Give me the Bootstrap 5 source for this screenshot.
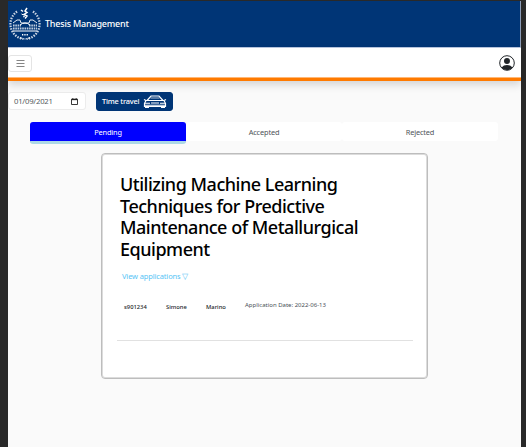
<!DOCTYPE html>
<html lang="en">
<head>
<meta charset="utf-8">
<meta name="viewport" content="width=device-width, initial-scale=1">
<title>Thesis Management</title>
<link href="https://cdn.jsdelivr.net/npm/bootstrap@5.3.0/dist/css/bootstrap.min.css" rel="stylesheet">
<style>
body{font-family:"Noto Sans","Open Sans",sans-serif;background:#292929;font-size:7.2px;line-height:1.5;overflow:hidden}
.app{width:513px;height:446px;margin:1px 0 0 8px;background:#fafafa}
.app svg{display:block;flex:none}
.brandbar{height:46px;background:#003576;color:#fff;border-right:1px solid #8d9db8}
.brandbar h1{font-size:9px;font-weight:500;letter-spacing:-.2px;line-height:14px;margin:0 0 0 3px}
.toolbar{height:34px;background:#fff;border-top:1px solid #b5c3dd;border-bottom:3px solid #ff7a00;box-shadow:0 4px 8px rgba(0,0,0,.15);padding-right:6px}
.toolbar::after{content:"";position:absolute;left:0;right:0;bottom:0;height:1px;background:#ffb877}
.menu-btn{width:24px;height:17px;border:1px solid #e4e4e4;border-radius:3px;background:#fff;padding:0;color:#777}
.date-box{width:78px;height:18px;border:1px solid #ececec;border-radius:3px;background:#fff;color:#555b61;font-size:7.7px;letter-spacing:-.22px;padding:1px 7px 0 5px}
.travel-btn{width:77px;height:19px;margin-left:10px;background:#003576;border:1px solid #003576;border-radius:3px;color:#fff;font-size:7.4px;font-weight:500;letter-spacing:-.2px;padding:0 5px;line-height:1}
.controls{padding-top:11px;height:41px}
.tabs{margin:0 23px 0 22px;height:22px}
.tab-item{height:19px;background:#fff;border:0;border-radius:3px;color:#50555a;font-size:7.4px;letter-spacing:-.16px;line-height:19px;padding:1px 0 0;text-align:center;flex:1 1 0}
.tab-item.active{background:#00f;color:#fff;height:22px;border-bottom:3px solid #add8e6}
.thesis{width:327px;height:226px;margin:9px 0 0 93px;border:1px solid #bdbdbd;box-shadow:inset 0 0 0 1px #dcdcdc;border-radius:4px;background:#fff;color:#000;padding:20px 14px 0 15px}
.thesis h2{font-size:18px;line-height:21.6px;font-weight:500;letter-spacing:-.48px;margin:0 0 0 3px;white-space:nowrap}
.view-link{color:#57c4f5;font-size:7.5px;letter-spacing:-.14px;line-height:12px;margin:10px 0 0 5px;text-decoration:none}
.entry{margin:15px 0 0;height:43px;padding-left:7px;font-size:5.8px;line-height:8px;color:#212529}
.entry strong{font-weight:500;margin-top:6px}
.entry span{color:#495057;font-size:6px;margin-top:4px}
.c1{width:42px}.c2{width:40px}.c3{width:39px}
.rule{height:1px;background:#e1e1e1}
</style>
<script src="https://cdn.jsdelivr.net/npm/bootstrap@5.3.0/dist/js/bootstrap.bundle.min.js"></script>
</head>
<body>
<div class="app">
  <header class="brandbar d-flex align-items-center">
    <svg width="34" height="34" viewBox="0 0 34 34" fill="none" stroke="#fff">
      <path d="M9 4.500A15.200 15.200 0 0 0 15 32M25 4.500A15.200 15.200 0 0 1 19 32" stroke-width="2.200" stroke-dasharray="1.500 1.200" opacity=".8"/>
      <path d="M12 30.500Q17 33.500 22 30.500" stroke-width="1.200" stroke-dasharray="2 .8" opacity=".8"/>
      <path d="M13 3l2 1.500M19 1l-2 3 2 1.500-3 2 3 1.500-2 2.500" stroke-width="1.500"/>
      <path d="M13.500 7l2 1M15 10l2-1" stroke-width="1"/>
      <path d="M5 16l4-3h3l1 3h8l1-3h3l4 3" stroke-width="1" opacity=".9"/>
      <path d="M5 18.500h8M21 18.500h8M5 21.500h24" stroke-width="1.800" stroke-dasharray="1.600 .7" opacity=".75"/>
      <path d="M12 18q5-4 10 0M5 24h24" stroke-width="1"/>
      <path d="M14 27.800h6" stroke-width="1.500" stroke-dasharray="1.300 1"/>
    </svg>
    <h1>Thesis Management</h1>
  </header>
  <nav class="toolbar d-flex align-items-center justify-content-between position-relative">
    <button class="menu-btn d-flex align-items-center justify-content-center" aria-label="Menu">
      <svg width="9" height="9" viewBox="0 0 9 9" stroke="currentColor"><path d="M.5 1.500h8M.5 4.500h8M.5 7.500h8" stroke-width=".9"/></svg>
    </button>
    <svg width="16" height="16" viewBox="0 0 16 16" fill="#212529"><circle cx="8" cy="8" r="7.300" fill="none" stroke="#212529" stroke-width="1"/><circle cx="8" cy="6" r="3"/><path d="M2.500 12.400Q4.600 10 8 10t5.500 2.400A7 7 0 0 1 8 15a7 7 0 0 1-5.500-2.600z"/></svg>
  </nav>
  <main>
    <div class="controls d-flex align-items-start">
      <div class="date-box d-flex align-items-center justify-content-between">
        <span>01/09/2021</span>
        <svg width="7" height="7" viewBox="0 0 7 7" fill="none" stroke="#222"><path d="M.5 1.300h6v5.200h-6z" stroke-width=".9"/><path d="M.5 1.500h6" stroke-width="1.300"/><path d="M1.800 0v1M5.200 0v1" stroke-width=".8"/></svg>
      </div>
      <button class="travel-btn d-flex align-items-center justify-content-between">
        <span>Time travel</span>
        <svg width="24" height="13" viewBox="0 0 24 13" fill="none" stroke="#fff"><path d="M4 5.500l4-4.500h8l4 4.500" stroke-width="1.200"/><path d="M7.500 3h9" stroke-width=".7"/><path d="M1 4.500l2 1M23 4.500l-2 1M3 5.500h18l1.500 3v3H1.500v-3z" stroke-width="1.200"/><path d="M2 8.300h5M17 8.300h5M8 8h8M2 10.300h20" stroke-width="1.100"/><path d="M2 12h4M18 12h4" stroke-width="1.800"/></svg>
      </button>
    </div>
    <div class="tabs d-flex align-items-start">
      <button class="tab-item active">Pending</button>
      <button class="tab-item">Accepted</button>
      <button class="tab-item">Rejected</button>
    </div>
    <article class="thesis">
      <h2>Utilizing Machine Learning<br>Techniques for Predictive<br>Maintenance of Metallurgical<br>Equipment</h2>
      <a class="view-link d-block" href="#">View applications ▽</a>
      <div class="entry d-flex align-items-start">
        <strong class="c1">s901234</strong><strong class="c2">Simone</strong><strong class="c3">Marino</strong><span>Application Date: 2022-06-13</span>
      </div>
      <div class="rule"></div>
    </article>
  </main>
</div>
</body>
</html>
